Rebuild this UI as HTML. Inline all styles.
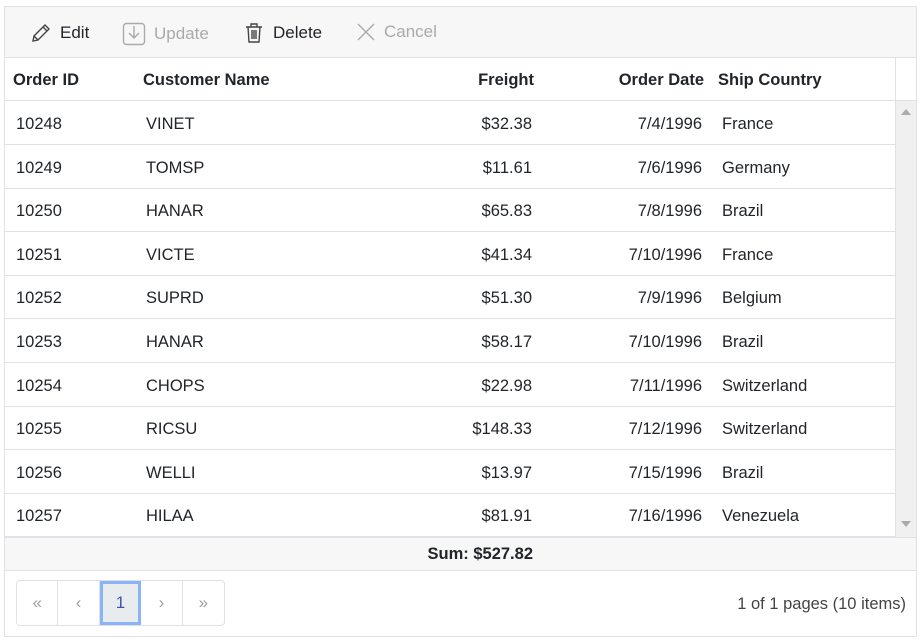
<!DOCTYPE html>
<html><head><style>
*{box-sizing:border-box;margin:0;padding:0}
body{width:922px;height:640px;background:#fff;font-family:"Liberation Sans",sans-serif;color:#212529;position:relative;overflow:hidden}
.g{position:absolute;left:4px;top:6px;width:913px;height:631px;border:1px solid #dee2e6}
.tb{position:absolute;left:0;top:0;width:911px;height:51px;background:#f7f7f8;border-bottom:1px solid #dee2e6}
.tbi{position:absolute;top:15px;font-size:17px;display:flex;align-items:center;gap:8px}
.hd{position:absolute;left:0;top:51px;width:911px;height:43px;border-bottom:1px solid #dee2e6;font-weight:bold;font-size:16.5px}
.c{position:absolute;white-space:nowrap}
.row{position:absolute;left:0;width:890px;height:44px;border-bottom:1px solid #dee2e6;font-size:16.5px}
.sb{position:absolute;left:890px;top:94px;width:21px;height:436px;background:#f0f0f0;border-left:1px solid #dee2e6}
.sum{position:absolute;left:0;top:530px;width:911px;height:34px;background:#f7f7f8;border-top:1px solid #dee2e6;border-bottom:1px solid #dee2e6;font-weight:bold;font-size:16.5px}
.pg{position:absolute;left:11px;top:573px;width:209px;height:46px;border:1px solid #dee2e6;border-radius:4px;display:flex}
.pg div{width:42px;border-right:1px solid #dee2e6;display:flex;align-items:center;justify-content:center;color:#9aa0a6;font-size:17px}
.pg div:last-child{border-right:none}
</style></head><body>
<div class="g">
<div class="tb">
 <div class="tbi" style="left:25px"><svg width="22" height="22" viewBox="0 0 22 22" fill="none" stroke="#444" stroke-width="1.4"><path d="M3 19l1-5L15 3l4 4L8 18z M13 5l4 4 M4 14l4 4"/></svg><span>Edit</span></div>
 <div class="tbi" style="left:117px;color:#aaa"><svg width="24" height="24" viewBox="0 0 24 24" fill="none" stroke="#aaa" stroke-width="1.4"><rect x="1.5" y="1.5" width="21" height="21" rx="3"/><path d="M12 4v12M7 11l5 5 5-5"/></svg><span>Update</span></div>
 <div class="tbi" style="left:238px"><svg width="22" height="22" viewBox="0 0 22 22" fill="none" stroke="#444" stroke-width="1.4"><path d="M3 5h16M8 5V2h6v3M5 5l1 15h10l1-15M9 8v9M11 8v9M13 8v9"/></svg><span>Delete</span></div>
 <div class="tbi" style="left:351px;color:#aaa"><svg width="20" height="20" viewBox="0 0 20 20" stroke="#aaa" stroke-width="1.4"><path d="M2 2l16 16M18 2L2 18"/></svg><span>Cancel</span></div>
</div>
<div class="hd">
 <span class="c" style="left:8px;top:13px">Order ID</span>
 <span class="c" style="left:138px;top:13px">Customer Name</span>
 <span class="c" style="right:382px;top:13px">Freight</span>
 <span class="c" style="right:212px;top:13px">Order Date</span>
 <span class="c" style="left:713px;top:13px">Ship Country</span>
 <div style="position:absolute;left:890px;top:0;height:42px;border-left:1px solid #dee2e6"></div>
</div>
<div id="rows"></div>
<div class="sb"><svg style="position:absolute;left:5px;top:8px" width="10" height="6"><path d="M0 6L5 0 10 6z" fill="#aaa"/></svg><svg style="position:absolute;left:5px;top:420px" width="10" height="6"><path d="M0 0L5 6 10 0z" fill="#aaa"/></svg></div>
<div class="sum"><span class="c" style="right:383px;top:7px">Sum: $527.82</span></div>
<div class="pg"><div>«</div><div>‹</div><div style="background:#e9ecef;border:3px solid #8ab4f8;color:#3f51b5">1</div><div>›</div><div>»</div></div>
<span class="c" style="right:10px;top:588px;font-size:16.5px;color:#444">1 of 1 pages (10 items)</span>
</div>
<script>
var d=[["10248","VINET","$32.38","7/4/1996","France"],["10249","TOMSP","$11.61","7/6/1996","Germany"],["10250","HANAR","$65.83","7/8/1996","Brazil"],["10251","VICTE","$41.34","7/10/1996","France"],["10252","SUPRD","$51.30","7/9/1996","Belgium"],["10253","HANAR","$58.17","7/10/1996","Brazil"],["10254","CHOPS","$22.98","7/11/1996","Switzerland"],["10255","RICSU","$148.33","7/12/1996","Switzerland"],["10256","WELLI","$13.97","7/15/1996","Brazil"],["10257","HILAA","$81.91","7/16/1996","Venezuela"]];
var h="";d.forEach(function(r,i){var t=94+i*43.6;h+='<div class="row" style="top:'+t+'px"><span class="c" style="left:11px;top:14px">'+r[0]+'</span><span class="c" style="left:141px;top:14px">'+r[1]+'</span><span class="c" style="right:363px;top:14px">'+r[2]+'</span><span class="c" style="right:193px;top:14px">'+r[3]+'</span><span class="c" style="left:717px;top:14px">'+r[4]+'</span></div>';});
document.getElementById("rows").innerHTML=h;
</script>
</body></html>
